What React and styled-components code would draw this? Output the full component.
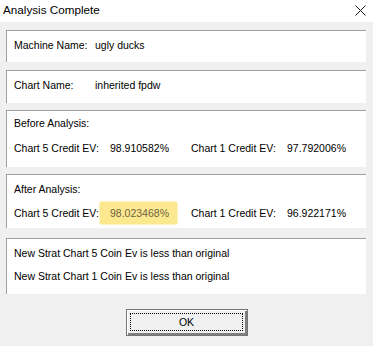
import React from "react";
import styled, { createGlobalStyle } from "styled-components";

const Global = createGlobalStyle`
  html, body { margin: 0; padding: 0; background: #f0f0f0; }
  #root { width: 373px; height: 346px; }
`;

const Window = styled.div`
  width: 373px;
  height: 346px;
  background: #f0f0f0;
  font-family: "Liberation Sans", Arial, sans-serif;
  font-size: 10.5px;
  color: #000;
  display: flex;
  flex-direction: column;
  overflow: hidden;
`;

const TitleBar = styled.div`
  height: 22px;
  background: #ffffff;
  display: flex;
  align-items: center;
  justify-content: space-between;
  padding: 0 7px 2px 3px;
  box-sizing: border-box;
`;

const Title = styled.div`
  font-size: 11.7px;
  color: #000;
  line-height: 14px;
`;

const Body = styled.div`
  padding: 8px 7px 0 6px;
  display: flex;
  flex-direction: column;
`;

const Panel = styled.div`
  background: #fff;
  border-top: 1px solid #a0a0a0;
  border-left: 1px solid #a0a0a0;
  height: ${(p) => p.$h}px;
  margin-top: ${(p) => p.$mt || 0}px;
  padding: ${(p) => p.$pt}px 0 0 7px;
  box-sizing: border-box;
  display: flex;
  flex-direction: column;
  gap: ${(p) => p.$gap || 0}px;
`;

const Line = styled.div`
  line-height: 13px;
  height: 13px;
  white-space: nowrap;
  display: flex;
`;

const Label = styled.span`
  display: inline-block;
  width: ${(p) => p.$w}px;
`;

const EvRow = styled.div`
  display: grid;
  grid-template-columns: 86px 77px 110px auto;
  align-items: center;
  white-space: nowrap;
  line-height: 13px;
  height: 13px;
`;

const Value = styled.span`
  padding-left: 10px;
`;

const Highlight = styled.span`
  display: flex;
  align-items: center;
  padding-left: 10px;
  height: 22px;
  margin: -5px 0 -4px;
  background: #fce88e;
  color: #6e6444;
  border-radius: 2px;
  box-shadow: 0 0 1px 1px rgba(252, 232, 142, 0.6);
`;

const Label2 = styled.span`
  padding-left: 14px;
`;

const Footer = styled.div`
  display: flex;
  padding-left: 120px;
  margin-top: 15px;
`;

const Button = styled.button`
  width: 122px;
  height: 27px;
  background: #f0f0f0;
  border: 1px solid #767676;
  box-shadow: inset 1px 1px 0 #ffffff, inset -2px -2px 0 #808080;
  padding: 3px;
  font-family: "Liberation Sans", Arial, sans-serif;
  font-size: 10.5px;
  color: #000;
  box-sizing: border-box;
  display: flex;
`;

const Focus = styled.span`
  flex: 1;
  border: 1px dotted #000;
  display: flex;
  align-items: center;
  justify-content: center;
  margin-right: 1px;
  margin-bottom: 1px;
`;

export default function App() {
  return (
    <>
      <Global />
      <Window>
        <TitleBar>
          <Title>Analysis Complete</Title>
          <svg width="11" height="11" viewBox="0 0 11 11">
            <path d="M0.5 0.5 L10.5 10.5 M10.5 0.5 L0.5 10.5" stroke="#1a1a1a" strokeWidth="1" fill="none" />
          </svg>
        </TitleBar>
        <Body>
          <Panel $h={32} $pt={8}>
            <Line>
              <Label $w={81}>Machine Name:</Label>
              ugly ducks
            </Line>
          </Panel>
          <Panel $h={33} $pt={8} $mt={8}>
            <Line>
              <Label $w={81}>Chart Name:</Label>
              inherited fpdw
            </Line>
          </Panel>
          <Panel $h={57} $pt={6} $gap={12} $mt={7}>
            <Line>Before Analysis:</Line>
            <EvRow>
              <span>Chart 5 Credit EV:</span>
              <Value>98.910582%</Value>
              <Label2>Chart 1 Credit EV:</Label2>
              <span>97.792006%</span>
            </EvRow>
          </Panel>
          <Panel $h={54} $pt={8} $gap={11} $mt={7}>
            <Line>After Analysis:</Line>
            <EvRow>
              <span>Chart 5 Credit EV:</span>
              <Highlight>98.023468%</Highlight>
              <Label2>Chart 1 Credit EV:</Label2>
              <span>96.922171%</span>
            </EvRow>
          </Panel>
          <Panel $h={56} $pt={8} $gap={10} $mt={10}>
            <Line>New Strat Chart 5 Coin Ev is less than original</Line>
            <Line>New Strat Chart 1 Coin Ev is less than original</Line>
          </Panel>
          <Footer>
            <Button>
              <Focus>OK</Focus>
            </Button>
          </Footer>
        </Body>
      </Window>
    </>
  );
}
